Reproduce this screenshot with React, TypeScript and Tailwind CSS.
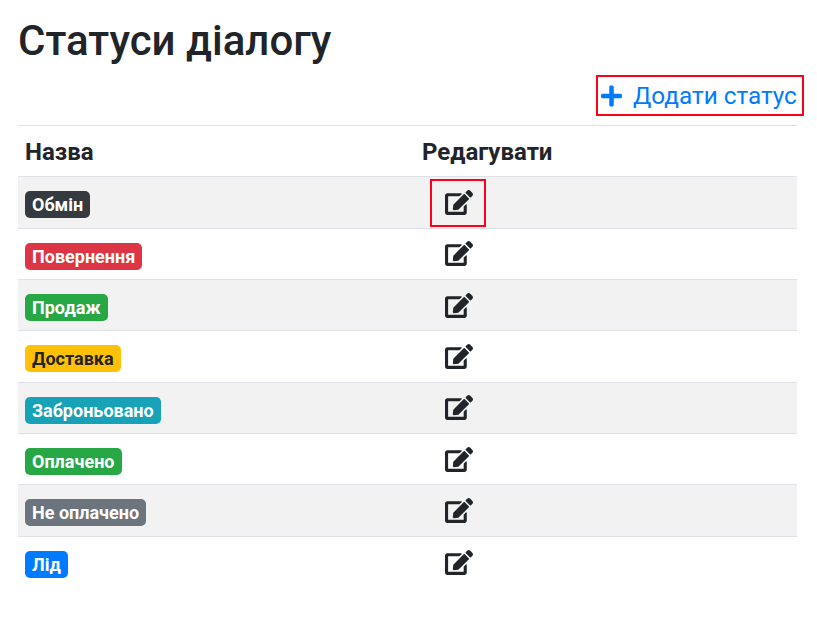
import React from "react";
import { FaEdit, FaPlus } from "react-icons/fa";

const statuses = [
  { name: "Обмін", color: "bg-[#343a40] text-white" },
  { name: "Повернення", color: "bg-[#dc3545] text-white" },
  { name: "Продаж", color: "bg-[#28a745] text-white" },
  { name: "Доставка", color: "bg-[#ffc107] text-[#212529]" },
  { name: "Заброньовано", color: "bg-[#17a2b8] text-white" },
  { name: "Оплачено", color: "bg-[#28a745] text-white" },
  { name: "Не оплачено", color: "bg-[#6c757d] text-white" },
  { name: "Лід", color: "bg-[#007bff] text-white" },
];

export default function App() {
  return (
    <div className="min-h-[622px] bg-white pl-[18px] pr-[20px] text-[#212529] font-['Roboto',sans-serif]">
      <h1 className="pt-[17px] text-[42px] leading-[48px] font-medium">Статуси діалогу</h1>

      <div className="flex justify-end -mr-[7px] mt-[10px] mb-[10px]">
        <a className="flex items-center h-[41px] w-[208px] pl-[3px] pt-[1px] border-2 border-[#ff0019] text-[24.3px] leading-[36px] text-[#007bff]">
          <FaPlus className="w-[21px] h-[24px] mr-[11px]" />
          <span>Додати статус</span>
        </a>
      </div>

      <table className="-mt-[1px] w-full table-fixed border-collapse">
        <thead>
          <tr className="h-[51.4px] border-t border-[#dee2e6]">
            <th className="w-[397px] px-[7px] pt-[2px] text-left text-[24px] font-bold">Назва</th>
            <th className="px-[7px] pt-[2px] text-left text-[24px] font-bold">Редагувати</th>
          </tr>
        </thead>
        <tbody>
          {statuses.map((s, i) => (
            <tr key={s.name} className={`h-[51.33px] border-t border-[#dee2e6] ${i % 2 === 0 ? "bg-[#f2f2f2]" : ""}`}>
              <td className="px-[7px] pt-[14px] pb-0 align-top">
                <span className={`block w-fit rounded-[5px] px-[7px] text-[18px] leading-[27px] font-bold ${s.color}`}>
                  {s.name}
                </span>
              </td>
              <td className="pl-[15px] pr-0 py-0">
                <span className={`flex items-center justify-center w-[56px] h-[48px] pl-[1px] border-2 ${i === 0 ? "border-[#ff0019]" : "border-transparent"}`}>
                  <FaEdit className="w-[28px] h-[25px]" />
                </span>
              </td>
            </tr>
          ))}
        </tbody>
      </table>
    </div>
  );
}
